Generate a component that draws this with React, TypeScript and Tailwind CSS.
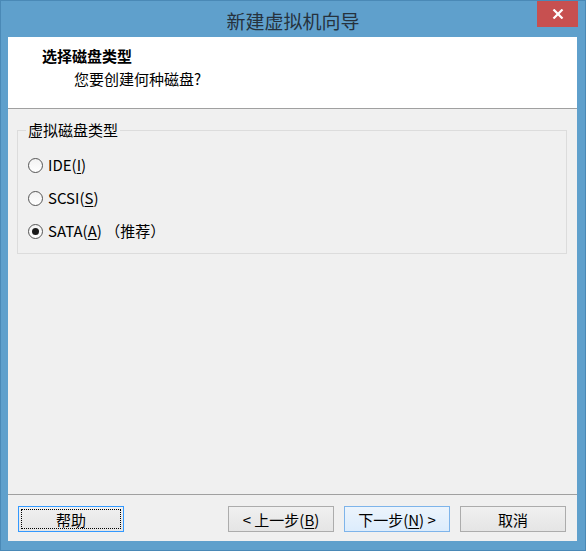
import React from 'react';

const FONT = '"Noto Sans CJK SC", "Noto Sans", sans-serif';

/**
 * Radio option row
 */
const RadioRow: React.FC<{ checked?: boolean; children: React.ReactNode }> = ({
  checked = false,
  children,
}) => {
  return (
    <label className="flex items-center h-[20px] gap-[5px]">
      <span className="w-[15px] h-[15px] rounded-full border border-[#555] bg-gradient-to-b from-[#f2f2f2] to-[#ffffff] flex items-center justify-center">
        {checked && <span className="w-[7px] h-[7px] rounded-full bg-[#1a1a1a]" />}
      </span>
      <span className="text-[15px] leading-[20px] text-[#000]">{children}</span>
    </label>
  );
};

/**
 * Dialog push button
 */
const DialogButton: React.FC<{
  variant?: 'normal' | 'default' | 'focused';
  children: React.ReactNode;
}> = ({ variant = 'normal', children }) => {
  const tone =
    variant === 'default'
      ? 'border-[#7eb4ea] bg-gradient-to-b from-[#ecf4fc] to-[#dcecfc]'
      : variant === 'focused'
        ? 'border-[#3399ff] bg-gradient-to-b from-[#f0f0f0] to-[#e5e5e5]'
        : 'border-[#acacac] bg-gradient-to-b from-[#f0f0f0] to-[#e5e5e5]';
  return (
    <button
      className={`w-[106px] h-[26px] border ${tone} flex items-center justify-center p-[2px] text-[15px] text-[#000]`}
    >
      <span
        className={`w-full h-full flex items-center justify-center leading-none ${
          variant === 'focused' ? 'border border-dotted border-[#000]' : ''
        }`}
      >
        {children}
      </span>
    </button>
  );
};

export default function App() {
  return (
    <div
      className="w-[586px] h-[551px] bg-[#5fa0cc] border border-[#4a89b6] flex flex-col"
      style={{ fontFamily: FONT }}
    >
      {/* Title bar */}
      <div className="relative h-[36px] flex items-center justify-center shrink-0">
        <span className="text-[19px] text-[#26323d] leading-none mt-[2px]">新建虚拟机向导</span>
        <div className="absolute right-[7px] top-0 w-[41px] h-[26px] bg-[#c75050] flex items-center justify-center">
          <svg width="12" height="10" viewBox="0 0 12 10">
            <path d="M1.5 0.5 L10.5 9.5 M10.5 0.5 L1.5 9.5" stroke="#fff" strokeWidth="2.2" />
          </svg>
        </div>
      </div>

      {/* Client area */}
      <div className="ml-[7px] mr-[8px] mb-[9px] flex-1 flex flex-col bg-[#f0f0f0]">
        {/* Header */}
        <div className="h-[72px] bg-white border-b border-[#a0a0a0] pl-[34px] pt-[9px] shrink-0">
          <div className="text-[15px] leading-[20px] font-bold text-[#000]">选择磁盘类型</div>
          <div className="text-[15px] leading-[20px] text-[#000] pl-[32px] mt-[3px]">
            您要创建何种磁盘?
          </div>
        </div>

        {/* Body */}
        <div className="flex-1 pt-[11px] pl-[9px] pr-[10px]">
          <fieldset className="border border-[#dcdcdc] h-[134px] pl-[10px] pt-[15px]">
            <legend className="px-[2px] ml-[-2px] text-[15px] leading-[20px] text-[#000]">虚拟磁盘类型</legend>
            <div className="flex flex-col gap-[13px]">
              <RadioRow>
                IDE(<span className="underline underline-offset-2">I</span>)
              </RadioRow>
              <RadioRow>
                SCSI(<span className="underline underline-offset-2">S</span>)
              </RadioRow>
              <RadioRow checked>
                SATA(<span className="underline underline-offset-2">A</span>) （推荐）
              </RadioRow>
            </div>
          </fieldset>
        </div>

        {/* Footer */}
        <div className="h-[47px] border-t border-[#a0a0a0] flex items-start pt-[11px] pl-[10px] pr-[11px] shrink-0">
          <DialogButton variant="focused">帮助</DialogButton>
          <div className="ml-auto flex gap-[10px]">
            <DialogButton>
              &lt; 上一步(<span className="underline underline-offset-2">B</span>)
            </DialogButton>
            <DialogButton variant="default">
              下一步(<span className="underline underline-offset-2">N</span>) &gt;
            </DialogButton>
            <DialogButton>取消</DialogButton>
          </div>
        </div>
      </div>
    </div>
  );
}
